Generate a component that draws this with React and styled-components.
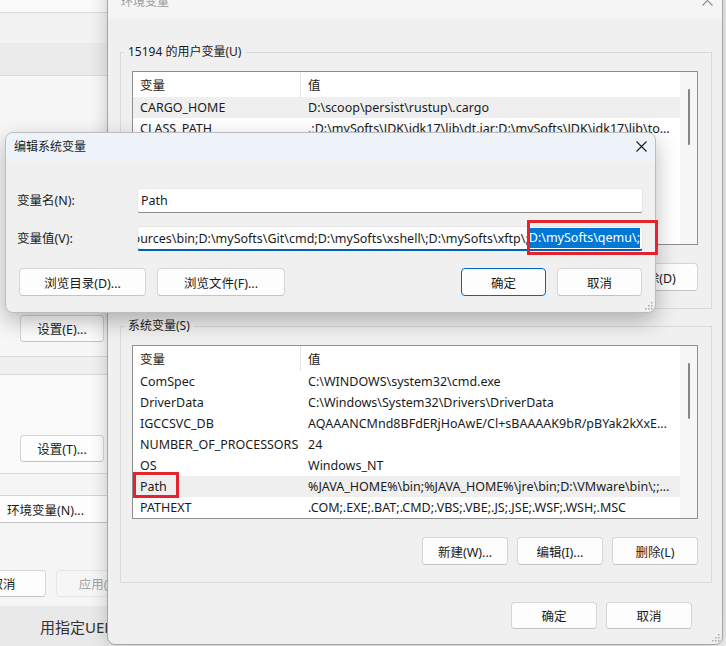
import React from "react";
import styled, { createGlobalStyle, css } from "styled-components";

const GlobalStyle = createGlobalStyle`
  html, body { margin: 0; padding: 0; }
  body {
    background: #f0f0f0;
    font-family: "Noto Sans", "Noto Sans CJK SC", sans-serif;
    font-size: 12.5px;
    color: #1b1b1b;
  }
`;

const Desktop = styled.div`
  position: relative;
  width: 726px;
  height: 646px;
  overflow: hidden;
  background: #f0f0f0;
`;

/* ---------- system properties window (behind) ---------- */

const BackWindow = styled.div`
  position: absolute;
  left: 0;
  top: 0;
  width: 117px;
  height: 646px;
  display: flex;
  flex-direction: column;
  background: #f7f7f7;
`;

const Band = styled.div`
  box-sizing: border-box;
  height: ${(p) => p.$h}px;
  background: ${(p) => p.$bg || "#f7f7f7"};
  border-bottom: ${(p) => (p.$line ? "1px solid #d9d9d9" : "none")};
  display: flex;
  flex-direction: column;
  align-items: flex-end;
  justify-content: flex-end;
  padding: 0 13px ${(p) => p.$pb || 0}px 0;
`;

const BackPanel = styled.div`
  box-sizing: border-box;
  height: 132px;
  background: #f5f5f5;
  display: flex;
  flex-direction: column;
  padding-top: 21px;
`;

const BackRow = styled.div`
  display: flex;
  gap: 10px;
  margin-top: 47px;
  margin-left: -40px;
`;

const Footer = styled.div`
  flex: 1;
  background: #e9e9e9;
  display: flex;
  align-items: center;
  padding-left: 40px;
  font-size: 15px;
  color: #333;
  white-space: nowrap;
`;

/* ---------- buttons ---------- */

const Button = styled.button`
  box-sizing: border-box;
  flex: none;
  width: ${(p) => p.$w || 86}px;
  height: ${(p) => p.$h || 28}px;
  padding: 0;
  font: inherit;
  font-size: 12.5px;
  color: #1b1b1b;
  background: #fdfdfd;
  border: 1px solid #d5d5d5;
  border-bottom-color: #c4c4c4;
  border-radius: 4px;
  display: flex;
  align-items: center;
  justify-content: center;
  white-space: nowrap;
  ${(p) =>
    p.$primary &&
    css`
      border: 1px solid #0067c0;
    `}
  ${(p) =>
    p.$disabled &&
    css`
      color: #a3a3a3;
      background: #f6f6f6;
      border-color: #e6e6e6;
    `}
`;

const WideButton = styled(Button)`
  width: 140px;
  justify-content: flex-start;
  padding-left: 7px;
  border-left: none;
  border-radius: 0 4px 4px 0;
`;

/* ---------- environment variables window ---------- */

const EnvWindow = styled.div`
  position: absolute;
  left: 107px;
  top: -18px;
  width: 616px;
  height: 663px;
  box-sizing: border-box;
  border: 1px solid #a6a6a6;
  border-radius: 8px;
  background: #f0f0f0;
  box-shadow: 0 0 18px rgba(0, 0, 0, 0.2);
  display: flex;
  flex-direction: column;
  overflow: hidden;
`;

const TitleBar = styled.div`
  flex: none;
  box-sizing: border-box;
  height: ${(p) => p.$h}px;
  display: flex;
  align-items: center;
  justify-content: space-between;
  padding-left: ${(p) => p.$pl}px;
  padding-bottom: ${(p) => p.$pb || 0}px;
  background: ${(p) => p.$bg};
  color: ${(p) => p.$color || "#1b1b1b"};
  font-size: 12px;
`;

const CloseBox = styled.div`
  width: 28px;
  height: 100%;
  display: flex;
  align-items: center;
  justify-content: center;
  margin-right: ${(p) => p.$mr || 0}px;
`;

const EnvBody = styled.div`
  padding: 26px 0 0 12px;
  display: flex;
  flex-direction: column;
`;

const Group = styled.fieldset`
  margin: 0;
  width: 592px;
  box-sizing: border-box;
  padding: 11px 13px 17px 11px;
  border: 1px solid #dadada;
  & + & {
    margin-top: 9px;
  }
`;

const Legend = styled.legend`
  margin-left: -8px;
  padding: 0 4px;
  font-size: 12px;
  line-height: 16px;
`;

const ListBox = styled.div`
  width: 566px;
  height: 174px;
  box-sizing: border-box;
  border: 1px solid #8e8e8e;
  background: #fff;
  display: flex;
  overflow: hidden;
`;

const ListMain = styled.div`
  flex: 1;
  min-width: 0;
  display: flex;
  flex-direction: column;
`;

const Cols = styled.div`
  display: grid;
  grid-template-columns: 168px 1fr;
  align-items: center;
  height: ${(p) => p.$h}px;
  background: ${(p) => (p.$sel ? "#efefef" : "transparent")};
  white-space: nowrap;
`;

const HeadCell = styled.div`
  height: 100%;
  display: flex;
  align-items: center;
  padding-left: 7px;
  border-right: ${(p) => (p.$divider ? "1px solid #e3e3e3" : "none")};
`;

const Cell = styled.div`
  padding: 0 ${(p) => (p.$name ? 0 : 10)}px 0 7px;
  overflow: hidden;
  text-overflow: ${(p) => (p.$name ? "clip" : "ellipsis")};
`;

const ScrollTrack = styled.div`
  flex: none;
  width: 17px;
  background: #f6f6f6;
  display: flex;
  flex-direction: column;
  align-items: center;
`;

const Thumb = styled.div`
  width: 2px;
  height: 56px;
  margin-top: ${(p) => p.$top}px;
  border-radius: 1px;
  background: #858585;
`;

const ButtonRow = styled.div`
  display: flex;
  justify-content: ${(p) => p.$justify || "flex-end"};
  gap: ${(p) => p.$gap || 9}px;
  margin-top: ${(p) => p.$mt || 0}px;
  padding-right: ${(p) => p.$pr || 0}px;
  padding-left: ${(p) => p.$pl || 0}px;
`;

const Grip = styled.svg`
  position: absolute;
  right: 2px;
  bottom: 2px;
`;

/* ---------- edit dialog ---------- */

const EditDialog = styled.div`
  position: absolute;
  left: 5px;
  top: 132px;
  width: 651px;
  height: 181px;
  box-sizing: border-box;
  border: 1px solid #bdbdbd;
  border-radius: 8px;
  background: #f0f0f0;
  box-shadow: 0 8px 22px rgba(0, 0, 0, 0.28);
  display: flex;
  flex-direction: column;
  overflow: hidden;
`;

const DialogBody = styled.div`
  padding: 26px 12px 0 11px;
  display: flex;
  flex-direction: column;
`;

const FieldRow = styled.div`
  display: flex;
  align-items: center;
  margin-top: ${(p) => p.$mt || 0}px;
`;

const FieldLabel = styled.div`
  width: 120px;
  flex: none;
  padding-bottom: 2px;
`;

const TextBox = styled.div`
  width: 506px;
  height: 25px;
  box-sizing: border-box;
  background: #fff;
  border: 1px solid #e6e6e6;
  border-bottom: 1px solid #8a8a8a;
  border-radius: 3px;
  display: flex;
  align-items: center;
  padding: 0 3px;
  overflow: hidden;
  white-space: nowrap;
  ${(p) =>
    p.$focused &&
    css`
      justify-content: flex-end;
      padding: 0 2px 0 0;
      border-bottom: 2px solid #005fb8;
    `}
`;

const Selected = styled.span`
  background: #0078d7;
  color: #fff;
  line-height: 20px;
`;

const Spacer = styled.div`
  flex: 1;
`;

const RedMark = styled.div`
  position: absolute;
  box-sizing: border-box;
  border: 3px solid #e4232c;
  pointer-events: none;
`;

const CloseIcon = ({ color = "#1b1b1b" }) => (
  <svg width="11" height="11" viewBox="0 0 11 11">
    <path d="M0.5 0.5 L10.5 10.5 M10.5 0.5 L0.5 10.5" stroke={color} strokeWidth="1.1" />
  </svg>
);

const GripIcon = () => (
  <Grip width="9" height="9" viewBox="0 0 9 9">
    {[
      [7, 1],
      [4, 4],
      [7, 4],
      [1, 7],
      [4, 7],
      [7, 7],
    ].map(([x, y]) => (
      <rect key={`${x}-${y}`} x={x} y={y} width="1.5" height="1.5" fill="#a8a8a8" />
    ))}
  </Grip>
);

const userVars = [
  ["CARGO_HOME", "D:\\scoop\\persist\\rustup\\.cargo", true],
  ["CLASS_PATH", ".;D:\\mySofts\\JDK\\jdk17\\lib\\dt.jar;D:\\mySofts\\JDK\\jdk17\\lib\\tools.jar"],
  ["GOPATH", "D:\\go"],
  ["OneDrive", "C:\\OneDrive"],
  ["Path", "D:\\bin"],
  ["TEMP", "C:\\Temp"],
  ["TMP", "C:\\Temp"],
];

const sysVars = [
  ["ComSpec", "C:\\WINDOWS\\system32\\cmd.exe"],
  ["DriverData", "C:\\Windows\\System32\\Drivers\\DriverData"],
  ["IGCCSVC_DB", "AQAAANCMnd8BFdERjHoAwE/Cl+sBAAAAK9bR/pBYak2kXxEmJhXqQAAAAACAAAAAAAQZgAAAAEAACAAAAB"],
  ["NUMBER_OF_PROCESSORS", "24"],
  ["OS", "Windows_NT"],
  ["Path", "%JAVA_HOME%\\bin;%JAVA_HOME%\\jre\\bin;D:\\VMware\\bin\\;;;;;;;;;;;", true],
  ["PATHEXT", ".COM;.EXE;.BAT;.CMD;.VBS;.VBE;.JS;.JSE;.WSF;.WSH;.MSC"],
];

const VarList = ({ rows, thumbTop }) => (
  <ListBox>
    <ListMain>
      <Cols $h={25}>
        <HeadCell $divider>变量</HeadCell>
        <HeadCell>值</HeadCell>
      </Cols>
      {rows.map(([name, value, sel]) => (
        <Cols key={name} $h={21} $sel={sel}>
          <Cell $name>{name}</Cell>
          <Cell>{value}</Cell>
        </Cols>
      ))}
    </ListMain>
    <ScrollTrack>
      <Thumb $top={thumbTop} />
    </ScrollTrack>
  </ListBox>
);

export default function App() {
  return (
    <>
      <GlobalStyle />
      <Desktop>
        <BackWindow>
          <Band $h={13} $bg="#fafafa" $line />
          <Band $h={30} $bg="#f2f2f2" />
          <Band $h={33} $bg="#ebebeb" $line />
          <Band $h={281} $bg="#f7f7f7" $line $pb={14}>
            <Button $w={84} $h={27}>设置(E)...</Button>
          </Band>
          <Band $h={18} $bg="#f0f0f0" $line />
          <Band $h={99} $bg="#fafafa" $line $pb={11}>
            <Button $w={84} $h={27}>设置(T)...</Button>
          </Band>
          <BackPanel>
            <WideButton $h={28}>环境变量(N)...</WideButton>
            <BackRow>
              <Button $w={86} $h={27}>取消</Button>
              <Button $w={86} $h={27} $disabled>应用(A)</Button>
            </BackRow>
          </BackPanel>
          <Footer>用指定UEFI固件</Footer>
        </BackWindow>

        <EnvWindow>
          <TitleBar $h={35} $pl={13} $bg="#f5f5f5" $color="#9a9a9a">
            <span>环境变量</span>
            <CloseBox $mr={1}>
              <CloseIcon color="#8c8c8c" />
            </CloseBox>
          </TitleBar>
          <EnvBody>
            <Group>
              <Legend>15194 的用户变量(U)</Legend>
              <VarList rows={userVars} thumbTop={17} />
              <ButtonRow $mt={18}>
                <Button>新建(N)...</Button>
                <Button>编辑(E)...</Button>
                <Button>删除(D)</Button>
              </ButtonRow>
            </Group>
            <Group>
              <Legend>系统变量(S)</Legend>
              <VarList rows={sysVars} thumbTop={17} />
              <ButtonRow $mt={18}>
                <Button>新建(W)...</Button>
                <Button>编辑(I)...</Button>
                <Button>删除(L)</Button>
              </ButtonRow>
            </Group>
            <ButtonRow $mt={19} $pr={30}>
              <Button $h={27}>确定</Button>
              <Button $h={27}>取消</Button>
            </ButtonRow>
          </EnvBody>
          <GripIcon />
        </EnvWindow>

        <EditDialog>
          <TitleBar $h={29} $pl={8} $pb={3} $bg="#eef3f9">
            <span>编辑系统变量</span>
            <CloseBox $mr={0}>
              <CloseIcon />
            </CloseBox>
          </TitleBar>
          <DialogBody>
            <FieldRow>
              <FieldLabel>变量名(N):</FieldLabel>
              <TextBox>Path</TextBox>
            </FieldRow>
            <FieldRow $mt={13}>
              <FieldLabel>变量值(V):</FieldLabel>
              <TextBox $focused>
                <span>
                  D:\mySofts\nodejs\;D:\mySofts\Resources\bin;D:\mySofts\Git\cmd;D:\mySofts\xshell\;D:\mySofts\xftp\;
                </span>
                <Selected>D:\mySofts\qemu\;</Selected>
              </TextBox>
            </FieldRow>
            <ButtonRow $mt={17} $justify="flex-start" $gap={11} $pl={2} $pr={1}>
              <Button $w={127}>浏览目录(D)...</Button>
              <Button $w={128}>浏览文件(F)...</Button>
              <Spacer />
              <Button $w={85} $primary>确定</Button>
              <Button $w={85}>取消</Button>
            </ButtonRow>
          </DialogBody>
          <GripIcon />
        </EditDialog>

        <RedMark style={{ left: 527, top: 220, width: 131, height: 35 }} />
        <RedMark style={{ left: 133, top: 472, width: 46, height: 26 }} />
      </Desktop>
    </>
  );
}
